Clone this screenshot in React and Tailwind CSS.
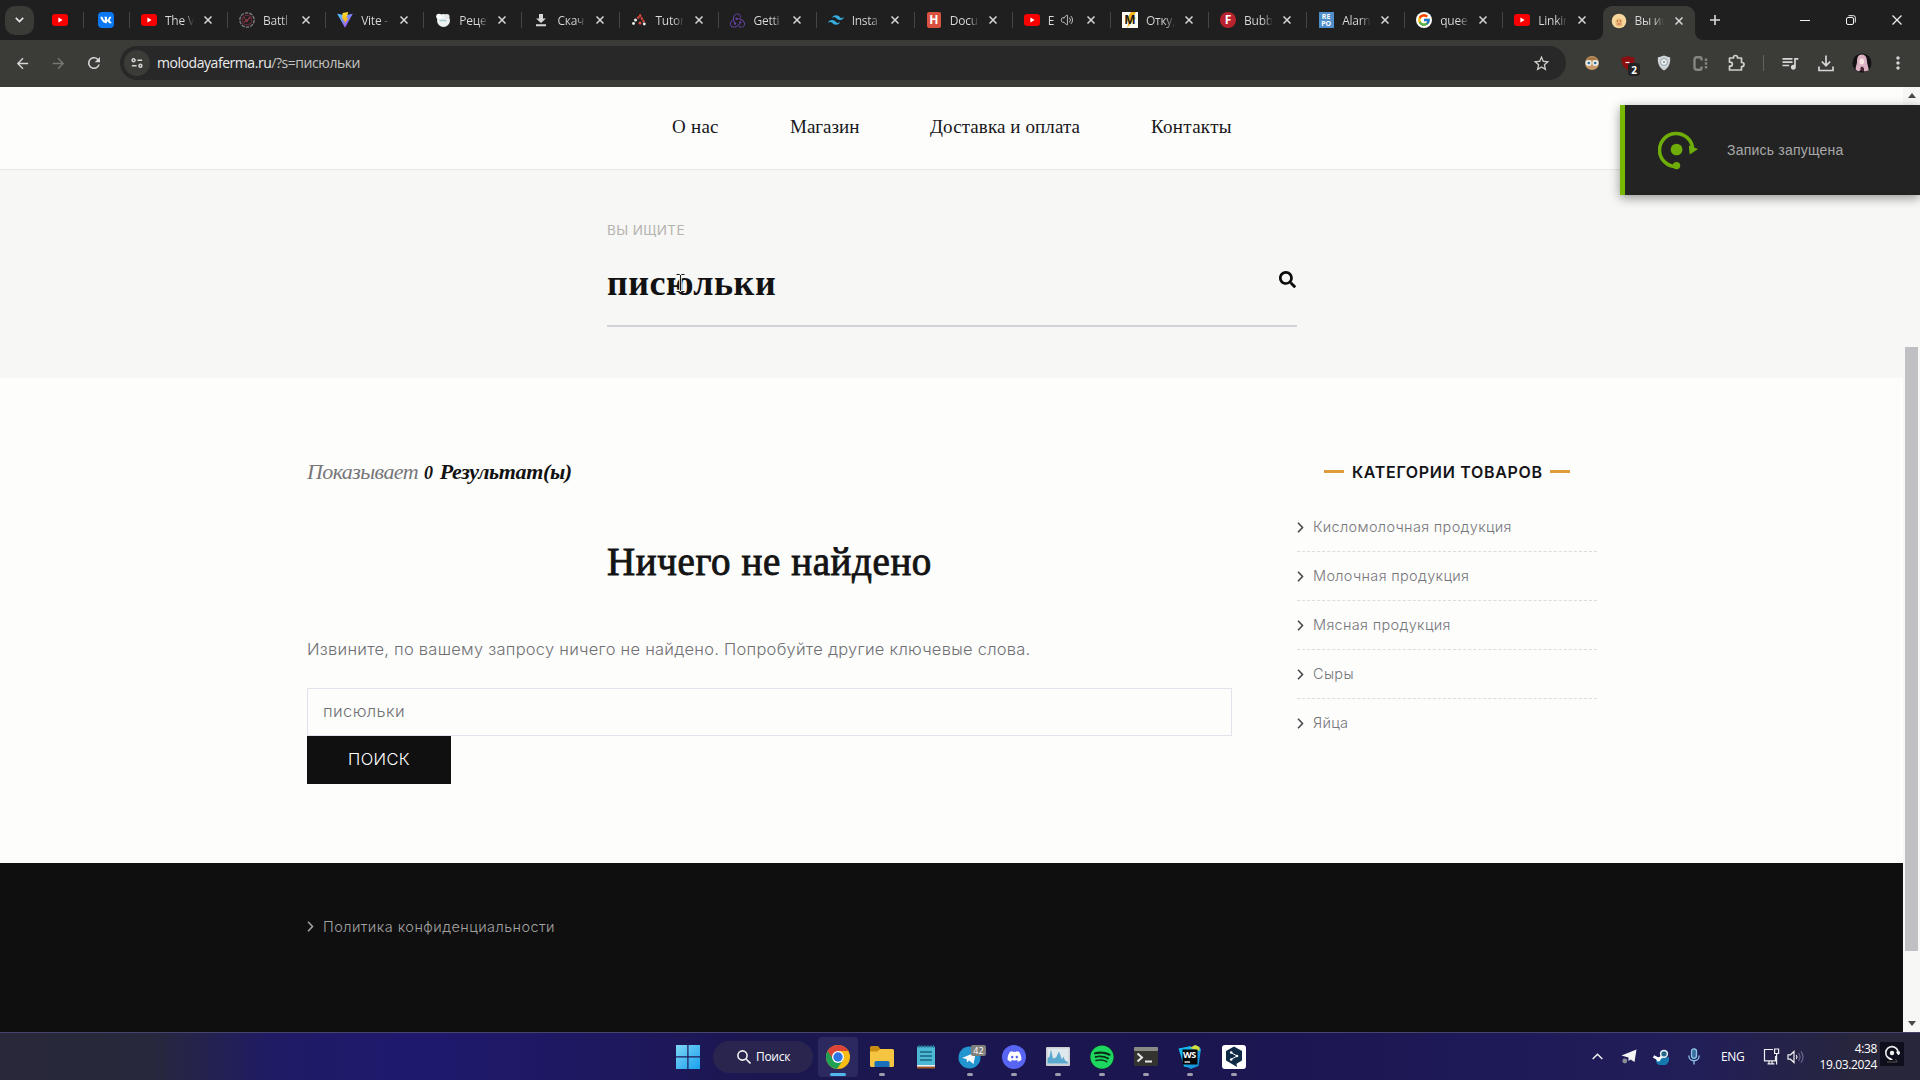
import React from "react";
import { FaVk, FaSearch, FaDiscord, FaSpotify } from "react-icons/fa";
import { FcGoogle } from "react-icons/fc";
import { SiRedux, SiTailwindcss } from "react-icons/si";
import { MdStarBorder, MdArrowBack, MdArrowForward, MdRefresh, MdQueueMusic, MdMoreVert } from "react-icons/md";
import { HiOutlineSpeakerWave } from "react-icons/hi2";

const UI = "font-['Open_Sans','Noto_Sans',sans-serif]";
const SERIF = "font-['Liberation_Serif',serif]";

/* ---------- favicons ---------- */

function YouTube() {
  return (
    <svg width="16" height="16" viewBox="0 0 16 16">
      <rect x="0" y="2" width="16" height="12" rx="3" fill="#f80000" />
      <path d="M6.4 5.6v4.8L10.6 8z" fill="#fff" />
    </svg>
  );
}

function Battle() {
  return (
    <svg width="16" height="16" viewBox="0 0 16 16" fill="none">
      <circle cx="8" cy="8" r="7.2" stroke="#7d7d82" strokeWidth="1.3" strokeDasharray="3.5 1" />
      <circle cx="8" cy="8" r="4.8" stroke="#5b2a33" strokeWidth="1.4" />
      <path d="M4.5 5.5c2 0 2 3 3 4s2-5 4-4.500M5 10l6-4" stroke="#8c3a48" strokeWidth="1.2" />
    </svg>
  );
}

function Vite() {
  return (
    <svg width="16" height="16" viewBox="0 0 16 16">
      <defs>
        <linearGradient id="vite-v" x1="0" y1="0" x2="1" y2="1">
          <stop offset="0" stopColor="#41d1ff" />
          <stop offset="1" stopColor="#bd34fe" />
        </linearGradient>
        <linearGradient id="vite-bolt" x1="0" y1="0" x2="0" y2="1">
          <stop offset="0" stopColor="#ffdd35" />
          <stop offset="1" stopColor="#ffa800" />
        </linearGradient>
      </defs>
      <path d="M0.200 1.800 8 15.800 15.800 1.800 8 3.200z" fill="url(#vite-v)" />
      <path d="M11.300 0 5.600 1.100 5.200 7.200 6.900 6.900 6.400 9.200 8 8.800 7.400 12 11.300 5.900 9.300 6.200z" fill="url(#vite-bolt)" />
    </svg>
  );
}

function Chef() {
  return (
    <svg width="16" height="16" viewBox="0 0 16 16">
      <circle cx="8.500" cy="8.500" r="6.500" fill="#eef2f0" />
      <circle cx="4" cy="4.500" r="2.800" fill="#fff" />
      <circle cx="12" cy="4.500" r="2.500" fill="#e2e8e8" />
      <path d="M4.500 8.500h7" stroke="#a6cbd6" strokeWidth="1.600" />
    </svg>
  );
}

function Save() {
  return (
    <svg width="16" height="16" viewBox="0 0 16 16" fill="#d6d6d6">
      <path d="M6 2h4v4.500h3L8 11 3 6.500h3zM3 12.200h10v2H3z" />
    </svg>
  );
}

function Tutor() {
  return (
    <svg width="16" height="16" viewBox="0 0 16 16">
      <path d="M6.500 6.500 9 3.500 13 10" stroke="#d4473f" strokeWidth="2.200" fill="none" strokeDasharray="2.500 0.600" />
      <circle cx="4.500" cy="8" r="1.500" fill="#f2f2f2" />
      <circle cx="2.500" cy="11.500" r="1.400" fill="#f2f2f2" />
      <circle cx="9" cy="11" r="1.500" fill="#e05246" />
      <circle cx="13.300" cy="12" r="1.400" fill="#f2f2f2" />
    </svg>
  );
}

function Hexlet() {
  return (
    <div className="flex h-4 w-[14px] items-center justify-center rounded-[2px] bg-[#d8523f] text-[12px] font-bold leading-none text-white">H</div>
  );
}

function Lightning() {
  return (
    <div className="relative flex h-4 w-4 items-center justify-center bg-[#fdfcf4]">
      <svg className="absolute inset-0" width="16" height="16" viewBox="0 0 16 16">
        <path d="M9 0h5l-3 5.500h3L5 16l2-6.500H3z" fill="#f6b51c" />
      </svg>
      <span className="relative text-[12px] font-bold leading-none text-[#1b1b1b]">M</span>
    </div>
  );
}

function Fred() {
  return (
    <div className="flex h-4 w-4 items-center justify-center rounded-full bg-[#b8232f] text-[12px] font-bold leading-none text-white">F</div>
  );
}

function Repo() {
  return (
    <div className="flex h-4 w-[15px] flex-col items-center justify-center bg-[#4f8dcb] text-[7px] font-bold leading-[7px] text-white">
      <span>RE</span>
      <span>PO</span>
    </div>
  );
}

function GoogleIcon() {
  return (
    <div className="flex h-4 w-4 items-center justify-center rounded-full bg-white">
      <FcGoogle size={14} />
    </div>
  );
}

function Ferma() {
  return (
    <svg width="16" height="16" viewBox="0 0 16 16">
      <circle cx="8" cy="8" r="7.300" fill="#f6d79c" />
      <path d="M4.500 9c0-5 7-5 7 0s-1 4.500-3.500 4.500S4.500 12 4.500 9z" fill="#ecb878" />
      <circle cx="6.500" cy="8" r=".7" fill="#a35a2c" />
      <circle cx="9.500" cy="8" r=".7" fill="#a35a2c" />
      <path d="M6.500 11h3" stroke="#c2565a" strokeWidth="1" />
    </svg>
  );
}

/* ---------- browser chrome ---------- */

const TABS = [
  { icon: <YouTube />, title: "The V" },
  { icon: <Battle />, title: "Battl" },
  { icon: <Vite />, title: "Vite -" },
  { icon: <Chef />, title: "Реце" },
  { icon: <Save />, title: "Скач" },
  { icon: <Tutor />, title: "Tutor" },
  { icon: <SiRedux size={15} color="#6d45ad" />, title: "Getti" },
  { icon: <SiTailwindcss size={16} color="#35aee0" />, title: "Insta" },
  { icon: <Hexlet />, title: "Docu" },
  { icon: <YouTube />, title: "E", sound: true },
  { icon: <Lightning />, title: "Отку," },
  { icon: <Fred />, title: "Bubb" },
  { icon: <Repo />, title: "Alarn" },
  { icon: <GoogleIcon />, title: "quee" },
  { icon: <YouTube />, title: "Linkin" },
];

function Cross({ className }) {
  return (
    <svg className={className} width="8" height="8" viewBox="0 0 8 8" stroke="currentColor" strokeWidth="1.500">
      <path d="M0.500 0.500 7.500 7.500M7.500 0.500 0.500 7.500" />
    </svg>
  );
}

function TabBody({ icon, title, sound }) {
  return (
    <>
      <span className="flex h-4 w-4 shrink-0 items-center justify-center">{icon}</span>
      <span
        className={
          (sound ? "w-[10px] " : "w-[29px] ") +
          "ml-2 shrink-0 overflow-hidden whitespace-nowrap bg-linear-to-r from-[#dcdcdc] from-65% to-transparent bg-clip-text pt-px text-[12px] leading-5 tracking-[-0.250px] text-transparent"
        }
      >
        {title}
      </span>
      {sound && <HiOutlineSpeakerWave className="-mr-0.5 ml-0.5 shrink-0 text-[#cfcfcf]" size={14} />}
      <Cross className="ml-auto shrink-0 text-[#d8d8d8]" />
    </>
  );
}

function TabStrip() {
  return (
    <div className="flex h-10 items-center bg-[#1f1f20]">
      <div className="ml-[5px] flex h-[29px] w-[29px] items-center justify-center rounded-[10px] bg-[#3a3a36]">
        <svg width="9" height="6" viewBox="0 0 9 6" fill="none" stroke="#e4e4e4" strokeWidth="1.700">
          <path d="M0.800 0.800 4.500 4.500 8.200 0.800" />
        </svg>
      </div>
      <div className="ml-[18px] flex w-8 items-center justify-between">
        <YouTube />
        <span className="h-4 w-px bg-[#45454a]" />
      </div>
      <div className="ml-[14px] flex w-8 items-center justify-between">
        <span className="flex h-4 w-4 items-center justify-center rounded-[4px] bg-[#0b78f2]">
          <FaVk size={12} color="#fff" />
        </span>
        <span className="h-4 w-px bg-[#45454a]" />
      </div>
      <div className="flex w-[1471.500px] shrink-0">
        {TABS.map((t, i) => (
          <div key={i} className="flex h-5 w-[98.100px] shrink-0 items-center">
            <div className="flex w-full items-center pl-[11px] pr-[15px]">
              <TabBody {...t} />
            </div>
            {i < TABS.length - 1 && <span className="h-4 w-px shrink-0 bg-[#45454a]" />}
          </div>
        ))}
      </div>
      <div className="relative ml-[1px] flex h-[34px] w-[92px] shrink-0 items-center self-end rounded-t-[9px] bg-[#3b3b38] pb-[5px] pl-[8px] pr-[12px]">
        <TabBody icon={<Ferma />} title="Вы ищ" />
        <svg className="absolute -left-2 bottom-0" width="8" height="8" fill="#3b3b38">
          <path d="M8 0v8H0a8 8 0 0 0 8-8z" />
        </svg>
        <svg className="absolute -right-2 bottom-0" width="8" height="8" fill="#3b3b38">
          <path d="M0 0v8h8a8 8 0 0 1-8-8z" />
        </svg>
      </div>
      <svg className="ml-[15px] shrink-0" width="10" height="10" stroke="#dcdcdc" strokeWidth="1.600">
        <path d="M5 0v10M0 5h10" />
      </svg>
      <svg className="ml-[80px] shrink-0" width="10" height="10" stroke="#f2f2f2">
        <path d="M0 5.500h10" />
      </svg>
      <svg className="ml-[36px] shrink-0" width="10" height="10" viewBox="0 0 10 10" stroke="#f2f2f2" fill="none">
        <rect x="0.500" y="2.500" width="7" height="7" rx="1.500" />
        <path d="M2.500 0.700h5q1.800 0 1.800 1.800v5" />
      </svg>
      <svg className="ml-[36px] shrink-0" width="10" height="10" stroke="#f2f2f2" strokeWidth="1.200">
        <path d="M0.500 0.500 9.500 9.500M9.500 0.500 0.500 9.500" />
      </svg>
    </div>
  );
}

function Slot({ children, className = "w-9" }) {
  return <div className={"flex h-6 shrink-0 items-center justify-center " + className}>{children}</div>;
}

function Toolbar() {
  return (
    <div className="flex h-[47px] items-center bg-[#3b3b38] pb-px pl-1 text-[#d6d6d6]">
      <Slot><MdArrowBack size={17} /></Slot>
      <Slot><MdArrowForward size={17} className="text-[#77776f]" /></Slot>
      <Slot><MdRefresh size={18} /></Slot>
      <div className="ml-2 flex h-[34px] w-[1446px] items-center rounded-full bg-[#282829] pl-1 pr-[15px]">
        <div className="flex h-[26px] w-[26px] items-center justify-center rounded-full bg-[#3b3b38]">
          <svg width="12" height="12" viewBox="0 0 14 12" fill="none" stroke="#d6d6d6" strokeWidth="1.800">
            <circle cx="3" cy="2.800" r="1.700" />
            <path d="M7.500 2.800H13M1 9.200h5.500" />
            <circle cx="11" cy="9.200" r="1.700" />
          </svg>
        </div>
        <span className="ml-[7px] text-[14px] leading-5 tracking-[-0.450px] text-[#ececec]">
          molodayaferma.ru<span className="text-[#c4c4c0]">/?s=писюльки</span>
        </span>
        <MdStarBorder className="ml-auto text-[#cfcfca]" size={19} />
      </div>
      <Slot className="ml-2 w-9">
        <svg width="16" height="16" viewBox="0 0 16 16">
          <circle cx="8" cy="8" r="7" fill="#c99c6a" />
          <path d="M2 5c2-4 10-4 12 0z" fill="#a87848" />
          <circle cx="4.600" cy="8" r="3" fill="#e8eef0" />
          <circle cx="11.400" cy="8" r="3" fill="#e8eef0" />
          <circle cx="4.800" cy="8" r="1.300" fill="#2f6d86" />
          <circle cx="11.200" cy="8" r="1.300" fill="#2f6d86" />
        </svg>
      </Slot>
      <Slot className="relative w-9">
        <svg width="16" height="16" viewBox="0 0 16 16">
          <path d="M8 1c3 1.500 4.500 1 6.500 1.500C15 9 12 13 8 15 4 13 1 9 1.500 2.500 3.500 2 5 2.500 8 1z" fill="#8c0f12" />
          <path d="M5.500 7.500h4" stroke="#fff" strokeWidth="1.200" />
        </svg>
        <span className="absolute left-[18px] top-3 flex h-[13px] w-[12px] items-center justify-center rounded-[3px] bg-[#232323] text-[10px] font-bold leading-none text-white">2</span>
      </Slot>
      <Slot>
        <svg width="14" height="16" viewBox="0 0 14 16">
          <path d="M7 0.500 13.200 2.500C13.500 9 11.500 13 7 15.500 2.500 13 .5 9 .8 2.500z" fill="#cfd5d6" />
          <circle cx="7" cy="7" r="3.400" fill="#f3f5f5" stroke="#8fa0a4" />
          <circle cx="7" cy="7" r="1.200" fill="#8fa0a4" />
        </svg>
      </Slot>
      <Slot>
        <svg width="15" height="15" viewBox="0 0 15 15" fill="none" stroke="#85857f" strokeWidth="2.400">
          <path d="M8.500 4.500V3Q8.500 1.300 7 1.300H4Q1.500 1.300 1.500 4v7Q1.500 13.700 4 13.700h3q1.500 0 1.500-1.700v-1.500" />
          <path d="M13 2.500v10" strokeDasharray="2.500 1.300" />
        </svg>
      </Slot>
      <Slot>
        <svg width="17" height="18" viewBox="0 0 17 18" fill="none" stroke="#d0d0cb" strokeWidth="1.700">
          <path d="M1.500 4h4V3.500a2 2 0 0 1 4 0V4h4v4.500h.5a2 2 0 0 1 0 4h-.5V16h-12v-3.800h.8a2 2 0 0 0 0-4h-.8z" strokeLinejoin="round" />
        </svg>
      </Slot>
      <Slot className="w-[18px]"><span className="h-4 w-px bg-[#62625c]" /></Slot>
      <Slot><MdQueueMusic size={20} /></Slot>
      <Slot>
        <svg width="16" height="17" viewBox="0 0 16 17" fill="none" stroke="#d6d6d6" strokeWidth="1.700">
          <path d="M8 0.500v10M3.800 6.500 8 10.700l4.200-4.200M1 11.500V15.500h14v-4" />
        </svg>
      </Slot>
      <Slot>
        <svg width="20" height="20" viewBox="0 0 20 20">
          <circle cx="10" cy="10" r="9.500" fill="#141114" />
          <path d="M10 1.500c4 0 5 4 5 7s2 6 1.500 9l-4 1-2.500-3-3 3-3-1.500C3 14 5 12 5 8.500 5 5 6 1.500 10 1.500z" fill="#dcb3c4" />
          <ellipse cx="9.800" cy="8.500" rx="2.300" ry="3" fill="#f7e6e2" />
          <path d="M8.500 18v-3.500l1.500-1 2 1.500v3.500z" fill="#4a2733" />
        </svg>
      </Slot>
      <Slot><MdMoreVert size={20} /></Slot>
    </div>
  );
}

/* ---------- page ---------- */

function Nav() {
  return (
    <nav className={"flex h-[83px] w-[1903px] border-b border-[#e9e9e4] pl-[672px] pt-[26px] text-[19px] leading-[28px] text-[#17171a] " + SERIF}>
      <a className="w-[118px] tracking-[0.250px]">О нас</a>
      <a className="w-[140px]">Магазин</a>
      <a className="w-[221px] tracking-[0.100px]">Доставка и оплата</a>
      <a className="tracking-[0.300px]">Контакты</a>
    </nav>
  );
}

function SearchHero() {
  return (
    <section className="relative flex h-[208px] w-[1903px] justify-center bg-[#f7f7f5]">
      <div className="ml-[1px] flex w-[690px] flex-col">
        <div className="mt-[50px] font-[Inter] text-[13.500px] leading-5 tracking-[0.390px] text-[#b4b4b0]">ВЫ ИЩИТЕ</div>
        <div className="mt-[23px] flex h-[64px] justify-between border-b-2 border-[#d2d2d9]">
          <span className={"text-[36px] font-bold leading-[40px] tracking-[0.550px] text-[#121212] " + SERIF}>писюльки</span>
          <FaSearch className="mr-px mt-2 text-[#0c0c0c]" size={17} />
        </div>
      </div>
      <svg className="absolute left-[676px] top-[104px]" width="9" height="18" viewBox="0 0 9 18" fill="none">
        <path d="M1 1h2.500l1 1 1-1H8M4.500 1.500v15M1 17h2.500l1-1 1 1H8" stroke="#f7f7f5" strokeWidth="2.500" />
        <path d="M0.500 0.500h3l1 1 1-1h3M4.500 1v16M0.500 17.500h3l1-1 1 1h3" stroke="#1a1a1a" />
      </svg>
    </section>
  );
}

const CATEGORIES = ["Кисломолочная продукция", "Молочная продукция", "Мясная продукция", "Сыры", "Яйца"];

function Chevron({ className }) {
  return (
    <svg className={className} width="7" height="11" viewBox="0 0 7 11" fill="none" stroke="currentColor" strokeWidth="1.600">
      <path d="M1 0.800 5.500 5.500 1 10.200" />
    </svg>
  );
}

function Results() {
  return (
    <main className="w-[925px] shrink-0">
      <h2 className={"flex h-[30px] items-baseline text-[22px] italic leading-[30px] " + SERIF}>
        <span className="w-[117px] tracking-[-0.590px] text-[#77777a]">Показывает</span>
        <strong className="tracking-[-0.350px] text-[#121212]">
          <span className="mr-0.5 inline-block text-[18px]">0</span> Результат(ы)
        </strong>
      </h2>
      <h1 className={"mt-[50px] text-center text-[39px] leading-[50px] tracking-[0.600px] text-[#141414] [-webkit-text-stroke:0.900px_#141414] " + SERIF}>
        Ничего не найдено
      </h1>
      <p className="mt-[48px] font-[Inter] text-[16.500px] font-light leading-7 tracking-[0.250px] text-[#707074]">
        Извините, по вашему запросу ничего не найдено. Попробуйте другие ключевые слова.
      </p>
      <div className="mt-[25px] flex h-12 items-center border border-[#e2e2ea] pb-px pl-[15px] font-[Inter] text-[16.500px] font-light tracking-[0.400px] text-[#707074]">
        писюльки
      </div>
      <button className="flex h-12 w-[144px] items-center justify-center bg-[#101010] pb-px font-[Inter] text-[16.500px] font-light tracking-[0.350px] text-white">
        ПОИСК
      </button>
    </main>
  );
}

function Sidebar() {
  return (
    <aside className="ml-[65px] w-[300px] shrink-0 font-[Inter]">
      <div className="flex h-[29px] items-center justify-center gap-2">
        <span className="h-[3px] w-5 bg-[#e09c3c]" />
        <h3 className="-mr-[0.700px] whitespace-nowrap text-[16px] font-semibold tracking-[0.690px] text-[#141418]">КАТЕГОРИИ ТОВАРОВ</h3>
        <span className="h-[3px] w-5 bg-[#e09c3c]" />
      </div>
      <ul className="mt-[17px]">
        {CATEGORIES.map((c) => (
          <li key={c} className="flex h-[49px] items-center border-b border-dashed border-[#dcdce2] text-[14.500px] font-light tracking-[0.330px] text-[#77777b] last:border-transparent">
            <Chevron className="mr-[9px] text-[#48484a]" />
            {c}
          </li>
        ))}
      </ul>
    </aside>
  );
}

function Scrollbar() {
  return (
    <div className="flex w-[17px] shrink-0 flex-col items-center justify-between bg-[#f7f7f5]">
      <svg className="mt-[6px]" width="8" height="5" fill="#4a4a4a"><path d="M4 0 8 5H0z" /></svg>
      <div className="mt-[178px] h-[604px] w-[13px] bg-[#c0c0c4]" />
      <svg className="mb-[6px]" width="8" height="5" fill="#4a4a4a"><path d="M4 5 8 0H0z" /></svg>
    </div>
  );
}

function Toast() {
  return (
    <div className="absolute right-0 top-[105px] flex h-[90px] w-[300px] items-center border-l-[5px] border-[#76b900] bg-[#232323] shadow-[0_3px_10px_rgba(0,0,0,0.4)]">
      <svg className="ml-[33px]" width="41" height="40" viewBox="0 0 42 40" fill="none">
        <path d="M19 37A17 17 0 1 1 35.500 18.500" stroke="#6fae08" strokeWidth="3.600" />
        <path d="M31.500 15.500 41 19 32.500 24.500z" fill="#6fae08" />
        <circle cx="19" cy="19.500" r="6" fill="#6fae08" />
        <circle cx="19" cy="36" r="3.800" fill="#6fae08" />
      </svg>
      <span className="ml-[28px] font-['Liberation_Sans'] text-[14px] tracking-[0.220px] text-[#a9a9a9]">Запись запущена</span>
    </div>
  );
}

/* ---------- taskbar ---------- */

const ICONS = {
  chrome: (
    <svg width="24" height="24" viewBox="0 0 24 24">
      <circle cx="12" cy="12" r="12" fill="#f6bd16" />
      <path d="M1.600 6A12 12 0 0 0 11 24L17 15 12 12z" fill="#1fa055" />
      <path d="M1.600 6 7 14l5-8h10.400A12 12 0 0 0 1.600 6z" fill="#db4437" />
      <circle cx="12" cy="12" r="6" fill="#fff" />
      <circle cx="12" cy="12" r="4.700" fill="#2f75e4" />
    </svg>
  ),
  folder: (
    <svg width="24" height="21" viewBox="0 0 24 21">
      <path d="M0 1.500Q0 0 1.500 0H8l2.500 3H10L8 7H0z" fill="#c98d12" />
      <path d="M0 5.500h7.500L10 3h12.500Q24 3 24 4.500V19.500Q24 21 22.500 21h-21Q0 21 0 19.500z" fill="#f5c541" />
      <path d="M4.500 21v-4.500Q4.500 15 6 15h12q1.500 0 1.500 1.500V21z" fill="#1a70b8" />
    </svg>
  ),
  notepad: (
    <svg width="18" height="24" viewBox="0 0 18 24">
      <rect y="1.500" width="18" height="19" rx="1" fill="#4cb8d6" />
      <path d="M2 0v3M5 0v3M8 0v3M11 0v3M14 0v3M16.500 0v3" stroke="#237f9e" />
      <path d="M3 7h12M3 11h12M3 15h12" stroke="#13647f" strokeWidth="1.500" />
      <path d="M0 20h18v1.800H0z" fill="#f2f2f2" />
      <path d="M0 21.800h18V23.500H0z" fill="#a8571e" />
    </svg>
  ),
  telegram: (
    <span className="relative block h-6 w-6">
      <svg width="24" height="24" viewBox="0 0 24 24">
        <circle cx="11.500" cy="12.500" r="11" fill="#2294cf" />
        <path d="M4 13 18 7 15.500 19 11 15.500 9 17.500 8.500 14z" fill="#f5fafc" />
      </svg>
      <span className="absolute left-[13px] top-0 flex h-[11px] w-[15px] items-center justify-center rounded-[2px] bg-[#7f7f7c] text-[9px] leading-none text-white">42</span>
    </span>
  ),
  discord: (
    <span className="flex h-6 w-6 items-center justify-center rounded-full bg-[#5865f2]">
      <FaDiscord size={15} color="#fff" />
    </span>
  ),
  monitor: (
    <svg width="24" height="19" viewBox="0 0 24 19">
      <rect width="24" height="19" rx="1" fill="#c9cfd2" />
      <rect x="1.500" y="1.500" width="21" height="15" fill="#dfe8ec" />
      <path d="M1.500 16.500v-5l2-2 1.500-7 2 9 3-1 3-6 3 8 1.500-3 1.500 4 3 1.500v1.500z" fill="#5aa9d0" />
    </svg>
  ),
  spotify: (
    <span className="flex h-6 w-6 items-center justify-center rounded-full bg-[#0b2e18]">
      <FaSpotify size={24} color="#1ed760" />
    </span>
  ),
  terminal: (
    <svg width="24" height="19" viewBox="0 0 24 19">
      <rect width="24" height="19" rx="1.500" fill="#33332f" />
      <rect width="24" height="4" rx="1" fill="#8b8b86" />
      <path d="M3.500 6.500 8 10.500 3.500 14.500M11 14.500h7" stroke="#e8e8e8" strokeWidth="2" fill="none" />
    </svg>
  ),
  webstorm: (
    <span className="relative block h-6 w-6">
      <svg width="24" height="24" viewBox="0 0 24 24">
        <path d="M0.500 3.500 13 1l2 18-2 4-7-1.500z" fill="#14b8ea" />
        <path d="M13 3 18 0l5 4-2.500 17-8 3-5-4z" fill="#1899dd" />
        <path d="M12 3 17 0l4.500 2v4z" fill="#d6e23c" />
        <rect x="4.500" y="4.500" width="15" height="15" fill="#050505" />
        <path d="M6.500 17h5.500" stroke="#fff" strokeWidth="1.300" />
      </svg>
      <span className="absolute left-[5px] top-[5px] text-[9px] font-bold leading-none tracking-[-0.500px] text-white">WS</span>
    </span>
  ),
  deepl: (
    <span className="flex h-6 w-6 items-center justify-center rounded-[3px] bg-white">
      <svg width="18" height="21" viewBox="0 0 18 21">
        <path d="M9 0.500 17 5v9.500L11.500 17.700 12 21 7 18 1 14.500V5z" fill="#0f2b46" />
        <path d="M6 6.500 12 10 6 13.500" stroke="#fff" strokeWidth="1" fill="none" />
        <circle cx="6.200" cy="6.500" r="1.300" fill="#fff" />
        <circle cx="12" cy="10" r="1.300" fill="#fff" />
        <circle cx="6.200" cy="13.500" r="1.300" fill="#fff" />
      </svg>
    </span>
  ),
};

const APPS = ["chrome", "folder", "notepad", "telegram", "discord", "monitor", "spotify", "terminal", "webstorm", "deepl"];

function AppButton({ name }) {
  return (
    <div className="flex w-11 shrink-0 justify-center">
      <div className={"relative flex h-10 w-10 items-center justify-center rounded-[4px] " + (name === "chrome" ? "bg-[#2c2860]" : "")}>
        {ICONS[name]}
        {name === "chrome" && <span className="absolute bottom-[1px] left-3 h-[3px] w-4 rounded-full bg-[#53b7ee]" />}
        {name !== "chrome" && name !== "notepad" && (
          <span className="absolute bottom-[1px] left-[17px] h-[3px] w-[6px] rounded-full bg-[#a09cb0]" />
        )}
      </div>
    </div>
  );
}

function Tray() {
  return (
    <div className="ml-auto flex shrink-0 items-center text-white">
      <svg width="11" height="7" viewBox="0 0 11 7" fill="none" stroke="#f0f0f0" strokeWidth="1.500">
        <path d="M0.700 6 5.500 1.200 10.300 6" />
      </svg>
      <svg className="ml-[18px]" width="16" height="15" viewBox="0 0 16 15">
        <path d="M0.500 6.500 15.500 0.500 13.500 13 9.500 10.500 7.500 12V8.500z" fill="#f5f5f5" />
        <circle cx="3.800" cy="12" r="2.400" fill="#8c8c94" />
      </svg>
      <svg className="ml-[16px]" width="16" height="16" viewBox="0 0 16 16">
        <path d="M3 10 16 8a7 7 0 0 1-13 5z" fill="#1577ae" />
        <path d="M0.500 7.500 5.500 10 10 7" stroke="#fff" strokeWidth="2.600" fill="none" />
        <circle cx="11" cy="4.800" r="3.400" stroke="#e9f3f8" strokeWidth="1.500" fill="#27678c" />
        <circle cx="5.500" cy="10.500" r="2" fill="#fff" />
      </svg>
      <svg className="ml-[19px]" width="12" height="17" viewBox="0 0 12 17" fill="none" stroke="#8fc7ea" strokeWidth="1.300">
        <rect x="3.500" y="0.800" width="5" height="9.500" rx="2.500" fill="#3b6f9f" />
        <path d="M0.800 7.500c0 7 10.400 7 10.400 0M6 13v3.500" />
      </svg>
      <span className="ml-[21px] w-6 text-[12px] leading-4 tracking-[-0.400px]">ENG</span>
      <svg className="ml-[18px]" width="17" height="17" viewBox="0 0 17 17" fill="none" stroke="#f0f0f0" strokeWidth="1.200">
        <path d="M10 1.500H1.500v11.300h11V8M4.500 15.800h7M6 13v2.500M9 13v2.500M11.600 1h4v4.500h-4zM13.600 5.500V16.500" />
      </svg>
      <svg className="ml-[7px]" width="17" height="14" viewBox="0 0 17 14" fill="none" stroke="#f0f0f0" strokeWidth="1.200">
        <path d="M1 4.800h2.500L7 1.500v11L3.500 9.200H1zM9.300 5q1.500 2 0 4" />
        <path d="M11.500 3q3 4 0 8M14 1.300q4 5.700 0 11.400" stroke="#6a6890" />
      </svg>
      <div className="ml-[13px] flex w-[60px] flex-col items-end text-[12px] leading-4 tracking-[-0.370px]">
        <span>4:38</span>
        <span>19.03.2024</span>
      </div>
      <div className="ml-[3px] mr-4 mt-px flex h-6 w-6 items-center justify-center self-start bg-[#0f0e1c]">
        <svg width="16" height="18" viewBox="0 0 16 18" fill="none">
          <path d="M7.500 14A6.200 6.200 0 1 1 14.200 8" stroke="#f0f0f0" strokeWidth="1.600" />
          <circle cx="8" cy="8" r="2.200" fill="#f0f0f0" />
          <path d="M12.500 7h3.500l-1.500 3zM5.500 14.500h3" fill="#f0f0f0" stroke="#f0f0f0" strokeWidth="1" />
          <path d="M3 17h10l-1.500-3" stroke="#55554c" strokeWidth="1" />
        </svg>
      </div>
    </div>
  );
}

function Taskbar() {
  return (
    <div className="flex h-12 w-full items-center border-t border-[#46436c] bg-[linear-gradient(90deg,#28283a_0px,#28283c_150px,#1f1b64_270px,#1f196e_420px,#1e185e_620px,#1b174f_760px,#1b1650_1200px,#1e1a58_1500px,#221e58_1700px,#27263c_1860px,#27263a_1920px)] pl-[676px]">
      <svg className="shrink-0" width="24" height="24" viewBox="0 0 24 24">
        <defs>
          <linearGradient id="win" x1="0" y1="0" x2="1" y2="1">
            <stop offset="0" stopColor="#7fd6f7" />
            <stop offset="1" stopColor="#18a0ee" />
          </linearGradient>
        </defs>
        <path d="M0 0h11.300v11.300H0zM12.500 0H24v11.300H12.500zM0 12.500h11.300V24H0zM12.500 12.500H24V24H12.500z" fill="url(#win)" />
      </svg>
      <div className="ml-[13px] flex h-8 w-[100px] shrink-0 items-center rounded-full bg-[#29254f] pl-6">
        <svg width="14" height="14" viewBox="0 0 14 14" fill="none" stroke="#f2f2f2" strokeWidth="1.600">
          <circle cx="5.500" cy="5.500" r="4.600" />
          <path d="M9 9l4.500 4.500" />
        </svg>
        <span className="ml-[5px] text-[12px] tracking-[-0.300px] text-white">Поиск</span>
      </div>
      <div className="ml-[3px] flex shrink-0">
        {APPS.map((a) => (
          <AppButton key={a} name={a} />
        ))}
      </div>
      <Tray />
    </div>
  );
}

export default function App() {
  return (
    <div className={"relative flex h-[1080px] w-[1920px] flex-col overflow-hidden bg-[#fdfdfc] " + UI}>
      <TabStrip />
      <Toolbar />
      <div className="flex h-[945px]">
        <div className="flex w-[1903px] shrink-0 flex-col">
          <Nav />
          <SearchHero />
          <div className="flex h-[485px] pl-[307px] pt-[79px]">
            <Results />
            <Sidebar />
          </div>
          <footer className="flex flex-1 items-start bg-[#0f0f10] pl-[307px] pt-[54px] font-[Inter] text-[14.500px] font-light leading-5 tracking-[0.450px] text-[#a2a2a0]">
            <Chevron className="mr-[9px] mt-1" />
            Политика конфиденциальности
          </footer>
        </div>
        <Scrollbar />
      </div>
      <Taskbar />
      <Toast />
    </div>
  );
}
